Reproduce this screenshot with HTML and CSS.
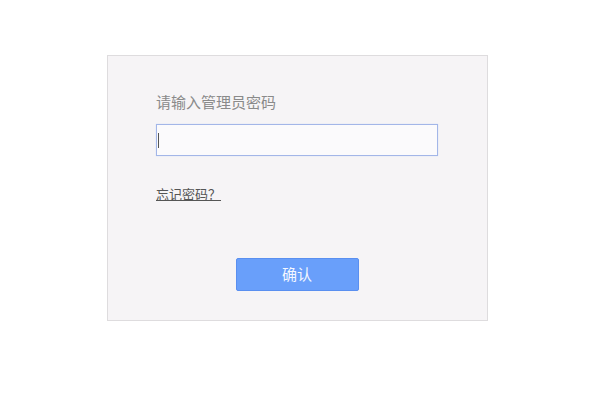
FILE: index.html
```html
<!DOCTYPE html>
<html lang="zh">
<head>
<meta charset="utf-8">
<link rel="stylesheet" href="styles.css">
</head>
<body>
<div class="panel">
  <div class="label">请输入管理员密码</div>
  <div class="field"><span class="caret"></span></div>
  <a class="forgot" href="#">忘记密码？</a>
  <div class="actions"><button class="confirm">确认</button></div>
</div>
</body>
</html>
```
FILE: styles.css
```css
html, body { margin: 0; padding: 0; background: #fff; }
body {
  padding: 55px 0 0 107px;
  font-family: "Liberation Sans", "Noto Sans CJK SC", sans-serif;
}
.panel {
  width: 379px;
  box-sizing: content-box;
  border: 1px solid #dedcde;
  background: #f6f4f6;
  padding: 37px 0 29px 0;
  display: flex;
  flex-direction: column;
}
.label {
  margin-left: 48px;
  font-size: 15px;
  line-height: 20px;
  color: #8a8a8a;
}
.field {
  position: relative;
  margin: 11px 0 0 48px;
  width: 280px;
  height: 30px;
  border: 1px solid #a3b6e8;
  background: #fbfafc;
  box-shadow: 0 0 1px #c9d6f5;
}
.caret {
  position: absolute;
  left: 1px;
  top: 8px;
  width: 1px;
  height: 15px;
  background: #555;
}
.forgot {
  align-self: flex-start;
  margin: 30px 0 0 48px;
  font-size: 13px;
  line-height: 17px;
  color: #555;
  text-decoration: underline;
}
.actions {
  display: flex;
  justify-content: center;
  margin-top: 55px;
}
.confirm {
  width: 123px;
  height: 33px;
  margin-left: -1px;
  border: 1px solid #5a8ff0;
  border-radius: 2px;
  background: #699ffa;
  color: #f4f7ff;
  font-family: "Noto Sans CJK SC", sans-serif;
  font-size: 15px;
  line-height: 20px;
  padding: 0 0 2px 0;
}
```
